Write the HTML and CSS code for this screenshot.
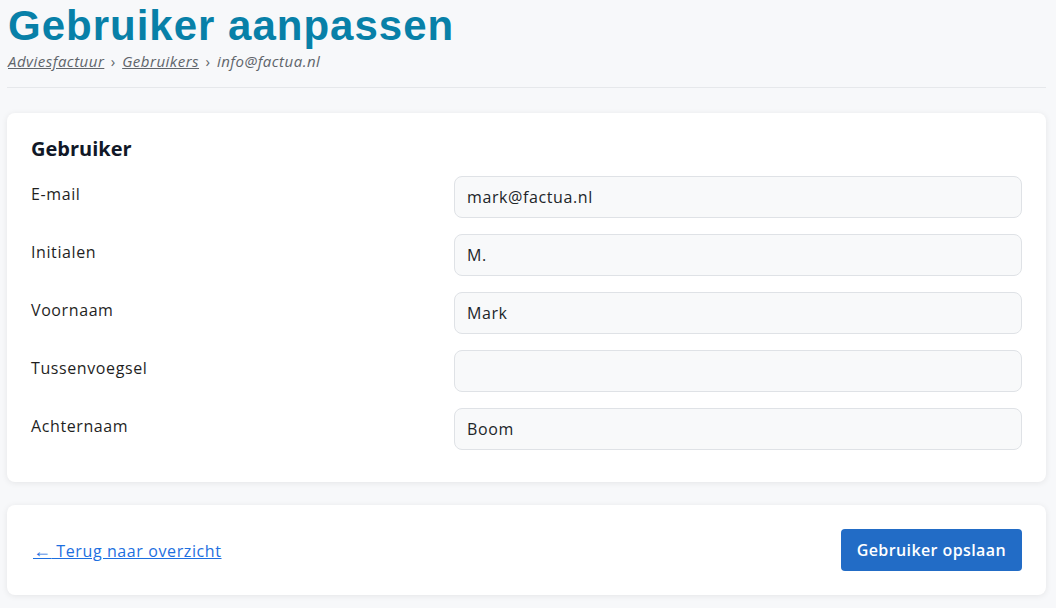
FILE: index.html
```html
<!DOCTYPE html>
<html lang="nl">
<head>
  <meta charset="UTF-8" />
  <meta name="viewport" content="width=device-width, initial-scale=1.0"/>
  <title>Gebruiker aanpassen</title>
  <link rel="stylesheet" href="styles.css">
</head>
<body>
  <div class="page">
    <div class="page-header">
      <h1>Gebruiker aanpassen</h1>
      <div class="breadcrumb">
        <a href="#">Adviesfactuur</a>
        <span class="sep">&rsaquo;</span>
        <a href="#">Gebruikers</a>
        <span class="sep">&rsaquo;</span>
        <span>info@factua.nl</span>
      </div>
    </div>

    <div class="card">
      <h2>Gebruiker</h2>
      <div class="form-row">
        <label for="email">E-mail</label>
        <input id="email" type="text" value="mark@factua.nl">
      </div>
      <div class="form-row">
        <label for="initialen">Initialen</label>
        <input id="initialen" type="text" value="M.">
      </div>
      <div class="form-row">
        <label for="voornaam">Voornaam</label>
        <input id="voornaam" type="text" value="Mark">
      </div>
      <div class="form-row">
        <label for="tussen">Tussenvoegsel</label>
        <input id="tussen" type="text" value="">
      </div>
      <div class="form-row">
        <label for="achternaam">Achternaam</label>
        <input id="achternaam" type="text" value="Boom">
      </div>
    </div>

    <div class="card actions">
      <a href="#" class="back-link"><span class="arrow">&larr;</span> Terug naar overzicht</a>
      <button class="btn-save">Gebruiker opslaan</button>
    </div>
  </div>
</body>
</html>
```

FILE: styles.css
```css
body {
  margin: 0;
  background-color: #f7f8fa;
  font-family: "Open Sans", "Liberation Sans", sans-serif;
  color: #212529;
}

.page {
  padding: 0 10px 0 7px;
}

.page-header {
  padding: 0 1px 15px;
  border-bottom: 1px solid #e6e8eb;
  margin-bottom: 25px;
}

h1 {
  margin: 0;
  padding-top: 4px;
  font-family: "Liberation Sans", Arial, sans-serif;
  font-size: 42px;
  line-height: 44px;
  font-weight: 700;
  letter-spacing: 1px;
  color: #0880a8;
}

.breadcrumb {
  margin-top: 3px;
  font-size: 15px;
  font-style: italic;
  color: #60656b;
  line-height: 21px;
  letter-spacing: 0.5px;
}

.breadcrumb a {
  color: #60656b;
}

.breadcrumb .sep {
  font-style: normal;
  margin: 0 2px;
}

.card {
  background-color: #fff;
  border-radius: 8px;
  box-shadow: 0 1px 6px rgba(0, 0, 0, 0.08);
  padding: 22px 24px 32px;
  margin-bottom: 23px;
}

.card h2 {
  margin: 0 0 13px;
  font-size: 20px;
  line-height: 28px;
  font-weight: 700;
  color: #111827;
}

.form-row {
  display: grid;
  grid-template-columns: 423px 1fr;
  align-items: start;
  margin-bottom: 16px;
}

.form-row:last-child {
  margin-bottom: 0;
}

.form-row label {
  font-size: 16px;
  line-height: 22px;
  padding-top: 7px;
  letter-spacing: 0.6px;
  color: #1f1f1f;
}

.form-row input {
  height: 42px;
  box-sizing: border-box;
  border: 1px solid #dfe2e6;
  border-radius: 8px;
  background-color: #f8f9fa;
  padding: 0 12px;
  font-family: inherit;
  font-size: 16px;
  letter-spacing: 0.6px;
  color: #212529;
}

.actions {
  display: flex;
  justify-content: space-between;
  align-items: center;
  padding: 24px 24px 24px 26px;
}

.back-link {
  color: #1d6fe0;
  font-size: 16px;
  letter-spacing: 0.6px;
}

.back-link .arrow {
  font-size: 18px;
}

.btn-save {
  background-color: #226cc6;
  color: #fff;
  border: none;
  border-radius: 4px;
  font-family: inherit;
  font-weight: 600;
  font-size: 16px;
  letter-spacing: 0.4px;
  height: 42px;
  padding: 0 16px;
  cursor: pointer;
}
```
